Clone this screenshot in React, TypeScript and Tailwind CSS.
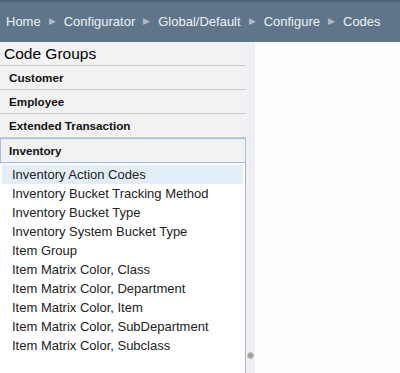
const crumbs = ["Home", "Configurator", "Global/Default", "Configure", "Codes"];

const groups = ["Customer", "Employee", "Extended Transaction"];

const codes = [
  "Inventory Action Codes",
  "Inventory Bucket Tracking Method",
  "Inventory Bucket Type",
  "Inventory System Bucket Type",
  "Item Group",
  "Item Matrix Color, Class",
  "Item Matrix Color, Department",
  "Item Matrix Color, Item",
  "Item Matrix Color, SubDepartment",
  "Item Matrix Color, Subclass",
];

export default function App() {
  return (
    <div className="w-[400px] h-[373px] overflow-hidden flex flex-col bg-[#fcfcfd] font-['Liberation_Sans',Arial,sans-serif]">
      <div className="h-[42px] shrink-0 bg-[#5f768a] border-t-2 border-[#4d6273] flex items-center pl-[6px] text-[13px] text-[#eef2f5]">
        {crumbs.map((c, i) => (
          <span key={c} className="flex items-center">
            {i > 0 && <span className="text-[9px] text-[#aebac5] mx-[8px]">▶</span>}
            {c}
          </span>
        ))}
      </div>
      <div className="flex flex-1 min-h-0">
        <div className="w-[246px] flex flex-col bg-[#f2f2f2]">
          <div className="h-[24px] shrink-0 border-b border-[#c8c8c8] pl-[4px] flex items-center text-[15.5px] text-black">
            Code Groups
          </div>
          {groups.map((g) => (
            <div
              key={g}
              className="h-[24px] shrink-0 border-b border-[#cdcdcd] pl-[9px] flex items-center text-[11.7px] font-bold text-[#111]"
            >
              {g}
            </div>
          ))}
          <div className="h-[25px] shrink-0 border border-[#a3bfe6] pl-[8px] flex items-center text-[11.7px] font-bold text-[#111]">
            Inventory
          </div>
          <div className="flex-1 bg-white border-r border-[#b4b4b4] pt-[2px] pl-[2px] pr-[2px]">
            {codes.map((c, i) => (
              <div
                key={c}
                className={`h-[19px] pl-[10px] flex items-center text-[13px] text-[#222] ${i === 0 ? "bg-[#e3eef9]" : ""}`}
              >
                {c}
              </div>
            ))}
          </div>
        </div>
        <div className="w-[9px] bg-[#eff0f6] flex flex-col justify-end items-center pb-[14px]">
          <div className="w-[7px] h-[7px] rounded-full bg-[#9c9c9c] border border-[#c4c4c4]" />
        </div>
        <div className="flex-1 bg-[#fdfdfe]" />
      </div>
    </div>
  );
}
